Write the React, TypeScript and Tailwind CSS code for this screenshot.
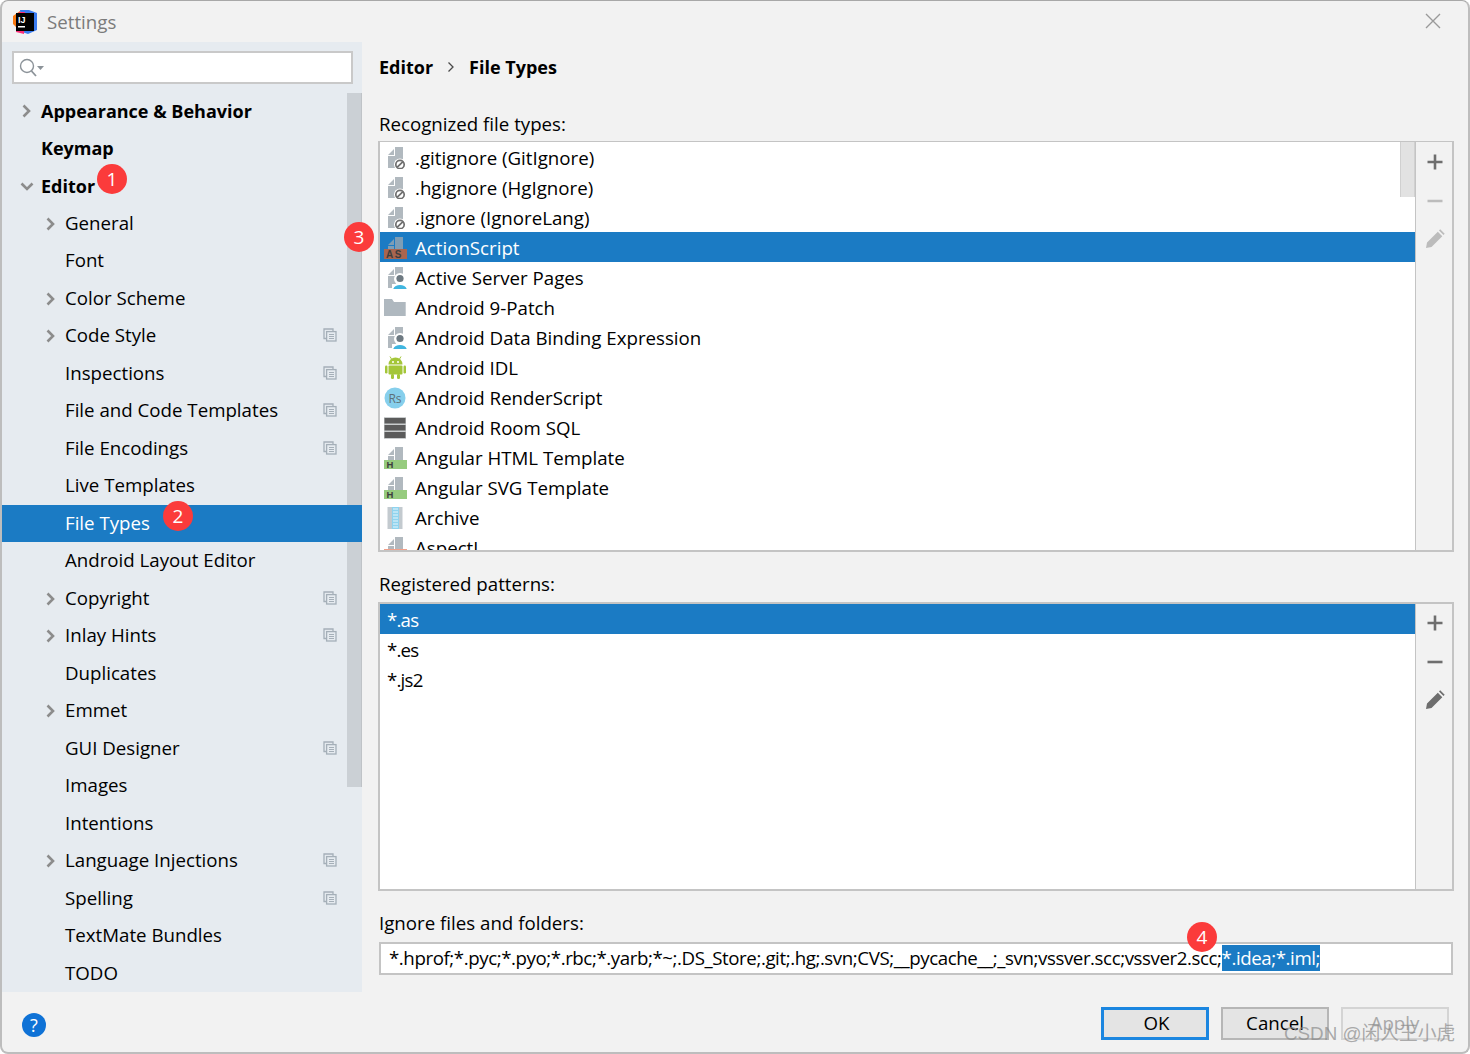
import type { ReactNode } from 'react';

const FILE_BODY = 'M11 2h8v9h-8z M10 4v6H4z M4 11h15v12H4z';

function FileIcon({ fill = '#b1b9bf', children }: { fill?: string; children?: ReactNode }) {
    return (
        <svg width="24" height="24" viewBox="0 0 24 24" className="shrink-0">
            <path d={FILE_BODY} fill={fill} />
            {children}
        </svg>
    );
}

const IgnoreIcon = () => (
    <FileIcon>
        <circle cx="16" cy="19.500" r="6" fill="#fff" />
        <circle cx="16" cy="19.500" r="4.200" fill="none" stroke="#6e6e6e" strokeWidth="1.700" />
        <path d="M13.300 22.200l5.400-5.400" stroke="#6e6e6e" strokeWidth="1.700" />
    </FileIcon>
);

const AsIcon = () => (
    <svg width="24" height="24" viewBox="0 0 24 24" className="shrink-0">
        <path d="M11 2h8v12h-8z M10 4v6H4z M4 11h6v3H4z" fill="#7e9db5" />
        <rect x="0" y="14" width="23" height="10.500" fill="#a9654f" />
        <text x="2" y="23" fontSize="10" fontWeight="700" letterSpacing="1.500" fontFamily="'Liberation Sans', sans-serif" fill="#3d3d3d">AS</text>
    </svg>
);

const PersonIcon = () => (
    <FileIcon>
        <circle cx="16" cy="14" r="6" fill="#fff" />
        <path d="M8 19h16v5H8z" fill="#fff" />
        <circle cx="16" cy="13.500" r="3.600" fill="#6e7a82" />
        <path d="M9 25c.5-3.500 3.500-5 7-5s6.500 1.500 7 5z" fill="#40b6e0" />
    </FileIcon>
);

const FolderIcon = () => (
    <svg width="24" height="24" viewBox="0 0 24 24" className="shrink-0">
        <path d="M0 4h8l2 3h11.700v14H0z" fill="#afb8bf" />
    </svg>
);

const AndroidIcon = () => (
    <svg width="24" height="24" viewBox="0 0 24 24" className="shrink-0">
        <path d="M4.500 9.500a6.500 6.500 0 0 1 14 0z" fill="#a4c639" />
        <path d="M7.500 4L6 1.500M15.500 4L17 1.500" stroke="#a4c639" strokeWidth="1" />
        <circle cx="9" cy="7" r="1" fill="#fff" />
        <circle cx="14" cy="7" r="1" fill="#fff" />
        <rect x="4.500" y="10.500" width="14" height="9" rx="1" fill="#a4c639" />
        <rect x="1" y="10.500" width="2.500" height="8" rx="1.200" fill="#a4c639" />
        <rect x="19.500" y="10.500" width="2.500" height="8" rx="1.200" fill="#a4c639" />
        <rect x="7" y="19" width="3" height="5" rx="1.200" fill="#a4c639" />
        <rect x="13" y="19" width="3" height="5" rx="1.200" fill="#a4c639" />
    </svg>
);

const RsIcon = () => (
    <svg width="24" height="24" viewBox="0 0 24 24" className="shrink-0">
        <circle cx="11" cy="13" r="10.500" fill="#86cfec" />
        <text x="11" y="17.500" fontSize="12" textAnchor="middle" fontFamily="'Open Sans', sans-serif" fill="#5d6f78">Rs</text>
    </svg>
);

const RoomIcon = () => (
    <svg width="24" height="24" viewBox="0 0 24 24" className="shrink-0">
        <rect x="0" y="2" width="22" height="22" fill="#c9cccd" />
        <rect x="0.500" y="3" width="21" height="5.500" fill="#5b5b5b" />
        <rect x="0.500" y="10" width="21" height="5.500" fill="#5b5b5b" />
        <rect x="0.500" y="17" width="21" height="6" fill="#5b5b5b" />
    </svg>
);

const HIcon = () => (
    <svg width="24" height="24" viewBox="0 0 24 24" className="shrink-0">
        <path d="M11 2h8v13h-8z M10 4v6H4z M4 11h6v4H4z" fill="#b1b9bf" />
        <rect x="0" y="15" width="23" height="9.500" fill="#96cb7e" />
        <text x="2.500" y="23" fontSize="9.500" fontWeight="700" fontFamily="'Liberation Sans', sans-serif" fill="#3d3d3d">H</text>
    </svg>
);

const ArchiveIcon = () => (
    <svg width="24" height="24" viewBox="0 0 24 24" className="shrink-0">
        <rect x="3.500" y="2" width="15" height="22" fill="#c3cacf" />
        <rect x="8" y="2" width="7" height="22" fill="#8fd3ee" />
        <path d="M9 4h5M9 7h5M9 10h5M9 13h5M9 16h5M9 19h5M9 22h5" stroke="#e8f6fc" strokeWidth="1.200" />
    </svg>
);

const AspectIcon = () => (
    <svg width="24" height="24" viewBox="0 0 24 24" className="shrink-0">
        <path d="M11 2h8v12h-8z M10 4v6H4z M4 11h6v3H4z" fill="#b1b9bf" />
        <rect x="0" y="14" width="23" height="10" fill="#f0a08a" />
    </svg>
);

const fileTypes: { name: string; icon: ReactNode }[] = [
    { name: '.gitignore (GitIgnore)', icon: <IgnoreIcon /> },
    { name: '.hgignore (HgIgnore)', icon: <IgnoreIcon /> },
    { name: '.ignore (IgnoreLang)', icon: <IgnoreIcon /> },
    { name: 'ActionScript', icon: <AsIcon /> },
    { name: 'Active Server Pages', icon: <PersonIcon /> },
    { name: 'Android 9-Patch', icon: <FolderIcon /> },
    { name: 'Android Data Binding Expression', icon: <PersonIcon /> },
    { name: 'Android IDL', icon: <AndroidIcon /> },
    { name: 'Android RenderScript', icon: <RsIcon /> },
    { name: 'Android Room SQL', icon: <RoomIcon /> },
    { name: 'Angular HTML Template', icon: <HIcon /> },
    { name: 'Angular SVG Template', icon: <HIcon /> },
    { name: 'Archive', icon: <ArchiveIcon /> },
    { name: 'AspectJ', icon: <AspectIcon /> },
];

const treeRows: { name: string; level: 0 | 1; arrow?: 'right' | 'down'; copy?: boolean; selected?: boolean }[] = [
    { name: 'Appearance & Behavior', level: 0, arrow: 'right' },
    { name: 'Keymap', level: 0 },
    { name: 'Editor', level: 0, arrow: 'down' },
    { name: 'General', level: 1, arrow: 'right' },
    { name: 'Font', level: 1 },
    { name: 'Color Scheme', level: 1, arrow: 'right' },
    { name: 'Code Style', level: 1, arrow: 'right', copy: true },
    { name: 'Inspections', level: 1, copy: true },
    { name: 'File and Code Templates', level: 1, copy: true },
    { name: 'File Encodings', level: 1, copy: true },
    { name: 'Live Templates', level: 1 },
    { name: 'File Types', level: 1, selected: true },
    { name: 'Android Layout Editor', level: 1 },
    { name: 'Copyright', level: 1, arrow: 'right', copy: true },
    { name: 'Inlay Hints', level: 1, arrow: 'right', copy: true },
    { name: 'Duplicates', level: 1 },
    { name: 'Emmet', level: 1, arrow: 'right' },
    { name: 'GUI Designer', level: 1, copy: true },
    { name: 'Images', level: 1 },
    { name: 'Intentions', level: 1 },
    { name: 'Language Injections', level: 1, arrow: 'right', copy: true },
    { name: 'Spelling', level: 1, copy: true },
    { name: 'TextMate Bundles', level: 1 },
    { name: 'TODO', level: 1 },
];

function Arrow({ dir }: { dir: 'right' | 'down' }) {
    return (
        <svg width="14" height="14" viewBox="0 0 14 14" className="shrink-0">
            <path d={dir === 'right' ? 'M3.500 1.500l5.500 5.500-5.500 5.500' : 'M1.500 4.500L7 10l5.500-5.500'} fill="none" stroke="#8c8c8c" strokeWidth="2.600" />
        </svg>
    );
}

function CopyIcon() {
    return (
        <svg width="14" height="14" viewBox="0 0 14 14" className="shrink-0">
            <path d="M3.500 10.500H1V1h9v2.500" fill="none" stroke="#a5afb8" strokeWidth="1.300" />
            <rect x="3.600" y="3.600" width="9.400" height="9.400" fill="#e6ebf0" stroke="#a5afb8" strokeWidth="1.300" />
            <path d="M6 6.500h5M6 8.500h5M6 10.500h5" stroke="#a5afb8" strokeWidth="1" />
        </svg>
    );
}

function TreeRow({ row }: { row: (typeof treeRows)[number] }) {
    const bold = row.level === 0;
    return (
        <div className={`relative flex h-[37.5px] shrink-0 items-center ${row.selected ? 'z-10 bg-[#1b7bc4] text-white' : 'text-black'} ${bold ? 'pl-[39px]' : 'pl-[63px]'}`}>
            {row.arrow && (
                <span className={`absolute top-[12px] ${bold ? 'left-[18px]' : 'left-[42px]'}`}>
                    <Arrow dir={row.arrow} />
                </span>
            )}
            <span className={bold ? 'text-[18px] font-bold' : ''}>{row.name}</span>
            {row.copy && (
                <span className="absolute left-[321px] top-[11px]">
                    <CopyIcon />
                </span>
            )}
        </div>
    );
}

function Badge({ n, className }: { n: number; className: string }) {
    return (
        <span className={`absolute z-20 flex h-[30px] w-[30px] items-center justify-center rounded-full bg-[#fb3b3b] text-[19px] text-white ${className}`}>
            {n}
        </span>
    );
}

function ToolIcon({ kind, enabled }: { kind: 'plus' | 'minus' | 'pencil'; enabled: boolean }) {
    const c = enabled ? '#6e6e6e' : '#bcbcbc';
    return (
        <svg width="20" height="20" viewBox="0 0 20 20">
            {kind === 'plus' && <path d="M10 2.500v15M2.500 10h15" stroke={c} strokeWidth="2.600" />}
            {kind === 'minus' && <path d="M2.500 10h15" stroke={c} strokeWidth="2.600" />}
            {kind === 'pencil' && <path d="M1 19l1-5.500L12.800 2.700l4.500 4.500L6.500 18zM14 1.500l1.200-1.200 4.500 4.500-1.200 1.200z" fill={c} />}
        </svg>
    );
}

function Toolbar({ active }: { active: boolean }) {
    return (
        <div className={`flex w-[37px] shrink-0 flex-col items-center gap-[18.5px] border-l border-[#c4c4c4] bg-[#f2f2f2] pl-[1px] ${active ? 'pt-[9px]' : 'pt-[10px]'}`}>
            <ToolIcon kind="plus" enabled />
            <ToolIcon kind="minus" enabled={active} />
            <ToolIcon kind="pencil" enabled={active} />
        </div>
    );
}

export default function App() {
    return (
        <div className="h-[1054px] w-[1470px] overflow-hidden bg-white font-['Open_Sans','Noto_Sans',sans-serif] text-[18.7px] leading-none text-black">
            <div className="relative flex h-full flex-col overflow-hidden rounded-lg border-x-2 border-b-2 border-t border-[#bdbdbd] border-t-[#a8a8a8] bg-[#f2f2f2]">
                {/* title bar */}
                <div className="flex h-[41px] shrink-0 items-center pl-[10px] pt-[1px]">
                    <svg width="26" height="26" viewBox="0 0 26 26">
                        <path d="M8 1l9 0 8 3v17l-9 4-6-2z" fill="#3a7bf0" />
                        <path d="M1 7l7-5 4 9-7 8-4-4z" fill="#f97a12" />
                        <path d="M4 23l3-20h6l-1 22z" fill="#fc2d78" />
                        <rect x="4" y="4" width="18" height="18" fill="#000" />
                        <text x="6" y="13.500" fontSize="9" fontWeight="700" fontFamily="'Liberation Sans', sans-serif" fill="#fff">IJ</text>
                        <rect x="6" y="17" width="7" height="1.500" fill="#fff" />
                    </svg>
                    <span className="ml-[9px] text-[#7b7b7b]">Settings</span>
                    <svg width="16" height="16" viewBox="0 0 16 16" className="absolute right-[27px] top-[12px]">
                        <path d="M1 1l14 14M15 1L1 15" stroke="#9a9a9a" strokeWidth="1.400" />
                    </svg>
                </div>

                <div className="flex h-[950px] shrink-0">
                    {/* sidebar */}
                    <div className="relative flex w-[360px] shrink-0 flex-col overflow-hidden bg-[#e6ebf0]">
                        <div className="mx-[10px] mb-[8px] mt-[9px] flex h-[33px] w-[341px] shrink-0 items-center border-2 border-[#c9c9c9] bg-white pl-[5px]">
                            <svg width="26" height="20" viewBox="0 0 26 20">
                                <circle cx="8" cy="8" r="6.500" fill="none" stroke="#8c9399" strokeWidth="1.400" />
                                <path d="M12.500 13l4.500 5" stroke="#8c9399" strokeWidth="1.800" />
                                <path d="M18 8h7l-3.500 4z" fill="#8c9399" />
                            </svg>
                        </div>
                        {treeRows.map(r => (
                            <TreeRow key={r.name} row={r} />
                        ))}
                        <div className="absolute left-[345px] top-[51px] h-[694px] w-[15px] border-r border-[#bfc3c7] bg-[#cbd0d5]" />
                    </div>

                    {/* right panel */}
                    <div className="flex min-w-0 flex-1 flex-col pl-[17px] pr-[14px]">
                        <div className="flex h-[50px] shrink-0 items-center gap-[12px] text-[18px] font-bold">
                            <span>Editor</span>
                            <svg width="12" height="12" viewBox="0 0 12 12">
                                <path d="M3.500 1.500L8 6l-4.500 4.500" fill="none" stroke="#4a4a4a" strokeWidth="1.300" />
                            </svg>
                            <span>File Types</span>
                        </div>

                        <div className="flex h-[42px] shrink-0 items-end">
                            <span className="whitespace-nowrap">Recognized file types:</span>
                        </div>
                        <div className="-ml-[1px] mt-[7px] flex h-[411px] shrink-0 border-x-2 border-b-2 border-t border-[#c4c4c4] bg-white">
                            <div className="relative min-w-0 flex-1 overflow-hidden">
                                {fileTypes.map(t => {
                                    const selected = t.name === 'ActionScript';
                                    return (
                                        <div key={t.name} className={`flex h-[30px] items-center gap-[7px] pl-[4px] ${selected ? 'bg-[#1b7bc4] text-white' : ''}`}>
                                            {t.icon}
                                            <span className="whitespace-nowrap pt-[2px]">{t.name}</span>
                                        </div>
                                    );
                                })}
                                <div className="absolute right-0 top-0 h-[55px] w-[15px] border-x border-[#d0d0d0] bg-[#e2e2e2]" />
                            </div>
                            <Toolbar active={false} />
                        </div>

                        <div className="flex h-[42px] shrink-0 items-end">
                            <span>Registered patterns:</span>
                        </div>
                        <div className="-ml-[1px] mt-[8px] flex h-[289px] shrink-0 border-2 border-[#c4c4c4] bg-white">
                            <div className="min-w-0 flex-1 tracking-[-0.8px]">
                                <div className="flex h-[30px] items-center bg-[#1b7bc4] pl-[7px] pt-[2px] text-white">*.as</div>
                                <div className="flex h-[30px] items-center pl-[7px] pt-[2px]">*.es</div>
                                <div className="flex h-[30px] items-center pl-[7px] pt-[2px]">*.js2</div>
                            </div>
                            <Toolbar active />
                        </div>

                        <div className="flex h-[42px] shrink-0 items-end">
                            <span>Ignore files and folders:</span>
                        </div>
                        <div className="mr-[1px] mt-[9px] flex h-[33px] shrink-0 items-center whitespace-nowrap border-2 border-[#c4c4c4] bg-white pl-[8px] tracking-[-0.42px]">
                            <span>*.hprof;*.pyc;*.pyo;*.rbc;*.yarb;*~;.DS_Store;.git;.hg;.svn;CVS;__pycache__;_svn;vssver.scc;vssver2.scc;</span>
                            <span className="mb-[1px] flex h-[26px] items-center bg-[#1b7bc4] text-white">*.idea;*.iml;</span>
                        </div>
                    </div>
                </div>

                {/* footer */}
                <div className="flex min-h-0 flex-1 items-start pl-[20px] pr-[19px] pt-[15px]">
                    <span className="mt-[6px] flex h-[24px] w-[24px] items-center justify-center rounded-full bg-[#0f72d6] text-[18px] text-white">?</span>
                    <div className="ml-auto flex gap-[12px]">
                        <button className="h-[33px] w-[108px] border-[3px] border-[#1b86e0] bg-[#e4e4e4] pb-[1px] pl-[3px] text-black">OK</button>
                        <button className="h-[33px] w-[108px] border-2 border-[#b6b6b6] bg-[#e4e4e4] pb-[1px] text-black">Cancel</button>
                        <button className="h-[33px] w-[108px] border-2 border-[#d4d4d4] bg-[#efefef] pb-[1px] text-[#a8a8a8]">Apply</button>
                    </div>
                </div>

                <Badge n={1} className="left-[95px] top-[163px]" />
                <Badge n={2} className="left-[161px] top-[500px]" />
                <Badge n={3} className="left-[342px] top-[221px]" />
                <Badge n={4} className="left-[1185px] top-[921px]" />
                <span className="absolute left-[1282px] top-[1024px] z-20 font-['Liberation_Sans','Noto_Sans_CJK_SC',sans-serif] text-[18.8px] text-[#8a8a8a]/70">CSDN @闲人王小虎</span>
            </div>
        </div>
    );
}
